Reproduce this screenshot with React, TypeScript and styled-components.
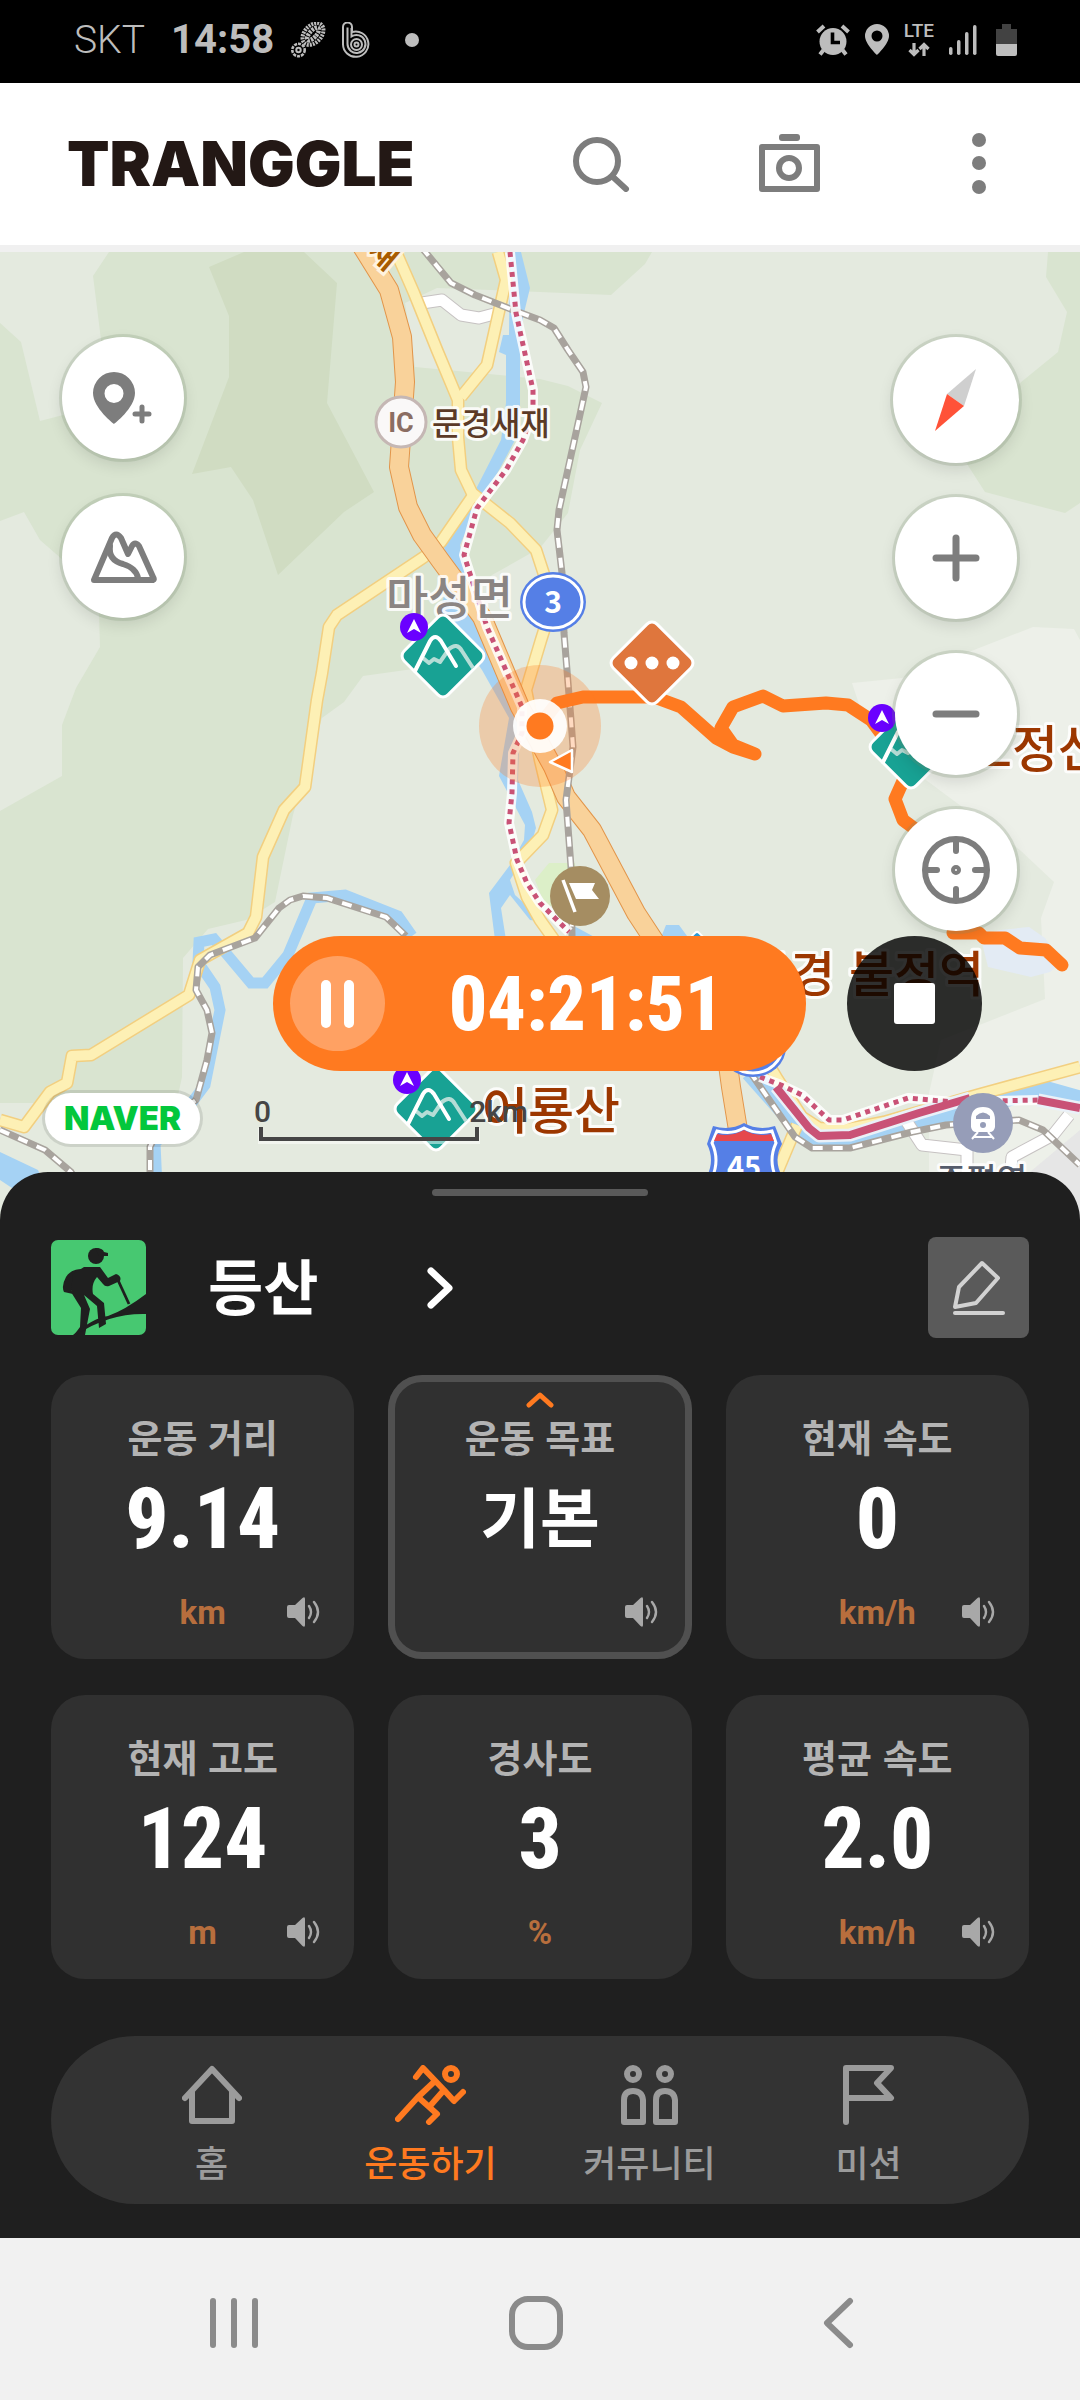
import React from 'react';
import styled, { createGlobalStyle } from 'styled-components';

const KR = "'Noto Sans CJK KR', 'Noto Sans', sans-serif";
const NUM = "'Roboto Condensed', 'Liberation Sans Narrow', Roboto, sans-serif";
const ORANGE = '#ff7a20';

const GlobalStyle = createGlobalStyle`
  *, *::before, *::after { box-sizing: border-box; }
  body { margin: 0; background: #1f1f1f; font-family: ${KR}; }
  button { border: 0; padding: 0; margin: 0; background: none; font: inherit; color: inherit; cursor: pointer; }
  h1, h2, p { margin: 0; padding: 0; font-weight: inherit; }
  svg { display: block; }
`;

const Page = styled.div`
  display: flex;
  flex-direction: column;
  min-height: 100vh;
`;

/* ---------- status bar ---------- */

const StatusBar = styled.div`
  display: flex;
  align-items: center;
  justify-content: space-between;
  height: 83px;
  padding: 0 63px 4px 74px;
  background: #000;
  color: #bdbdbd;
  font-family: Roboto, sans-serif;
`;
const StatusGroup = styled.div<{ $gap: number }>`
  display: flex;
  align-items: center;
  gap: ${(p) => p.$gap}px;
`;
const Carrier = styled.span`
  font-size: 39px;
  font-weight: 300;
  margin-right: 10px;
`;
const Clock = styled.time`
  font-size: 40px;
  font-weight: 700;
`;
const MoreDot = styled.span`
  width: 14px;
  height: 14px;
  margin-left: 18px;
  border-radius: 50%;
  background: #bdbdbd;
`;
const Network = styled.div`
  display: flex;
  flex-direction: column;
  align-items: center;
  gap: 3px;
  font-size: 19px;
  line-height: 16px;
  font-weight: 500;
`;

/* ---------- header ---------- */

const Header = styled.header`
  display: flex;
  align-items: center;
  justify-content: space-between;
  height: 169px;
  padding: 0 93px 0 67px;
  background: #fff;
  border-bottom: 7px solid #f0f0f0;
  color: #7d7d7d;
`;
const Brand = styled.h1`
  font-family: Inter, sans-serif;
  font-size: 62px;
  line-height: 62px;
  font-weight: 900;
  color: #231815;
`;
const HeaderTools = styled.div`
  display: flex;
  align-items: center;
  gap: 129px;
`;
const MoreButton = styled.button`
  margin-left: 22px;
`;

/* ---------- map ---------- */

const MapArea = styled.main`
  position: relative;
  flex: 1 0 auto;
  overflow: hidden;
  padding: 85px 61px 60px 62px;
  background: #e4eadf;
`;
const MapCanvas = styled.svg`
  position: absolute;
  inset: 0;
  width: 100%;
  height: 100%;
`;
const MapTools = styled.div`
  position: relative;
  display: flex;
  justify-content: space-between;
`;
const ToolColumn = styled.div<{ $gap: number }>`
  display: flex;
  flex-direction: column;
  align-items: center;
  gap: ${(p) => p.$gap}px;
`;
const RoundButton = styled.button<{ $large?: boolean }>`
  display: grid;
  place-items: center;
  width: ${(p) => (p.$large ? 126 : 122)}px;
  height: ${(p) => (p.$large ? 126 : 122)}px;
  border-radius: 50%;
  background: #fff;
  color: #7d7d7d;
  box-shadow: 0 0 0 3px rgba(120, 140, 110, 0.22), 0 6px 16px rgba(0, 0, 0, 0.12);
`;
const TimerRow = styled.div`
  position: relative;
  display: flex;
  justify-content: flex-end;
  gap: 41px;
  margin-top: 5px;
  padding-right: 37px;
`;
const Timer = styled.div`
  display: flex;
  align-items: center;
  width: 533px;
  height: 135px;
  padding-left: 17px;
  border-radius: 68px;
  background: ${ORANGE};
`;
const PauseButton = styled.button`
  display: flex;
  align-items: center;
  justify-content: center;
  gap: 13px;
  width: 95px;
  height: 95px;
  border-radius: 50%;
  background: #ffa163;
`;
const PauseBar = styled.span`
  width: 10px;
  height: 48px;
  border-radius: 5px;
  background: #fff;
`;
const Elapsed = styled.time`
  flex: 1;
  padding-right: 19px;
  text-align: center;
  font-family: ${NUM};
  font-size: 76px;
  line-height: 76px;
  font-weight: 800;
  color: #fff;
`;
const StopButton = styled.button`
  display: grid;
  place-items: center;
  width: 135px;
  height: 135px;
  border-radius: 50%;
  background: rgba(0, 0, 0, 0.81);
`;
const StopSquare = styled.span`
  width: 41px;
  height: 41px;
  border-radius: 3px;
  background: #fff;
`;
const MapFooter = styled.div`
  position: relative;
  display: flex;
  align-items: center;
  gap: 54px;
  margin: 22px 0 0 -17px;
`;
const NaverBadge = styled.a`
  display: grid;
  place-items: center;
  width: 155px;
  height: 51px;
  border-radius: 26px;
  background: #fff;
  box-shadow: 0 0 0 3px rgba(0, 0, 0, 0.1);
  font-family: Inter, sans-serif;
  font-size: 33px;
  line-height: 33px;
  font-weight: 900;
  color: #03c73c;
  text-decoration: none;
`;
const Scale = styled.div`
  width: 274px;
  font-family: Roboto, sans-serif;
  font-size: 30px;
  line-height: 30px;
  font-weight: 500;
  color: #454545;
`;
const ScaleLabels = styled.div`
  display: flex;
  justify-content: space-between;
`;
const ScaleBar = styled.div`
  width: 220px;
  height: 14px;
  margin-left: 5px;
  border: solid #454545;
  border-width: 0 4px 4px;
  box-shadow: 0 2px 0 1px rgba(255, 255, 255, 0.5);
`;

/* ---------- workout panel ---------- */

const Panel = styled.section`
  position: relative;
  margin-top: -48px;
  padding: 17px 51px 34px;
  border-radius: 48px 48px 0 0;
  background: #1f1f1f;
`;
const Handle = styled.div`
  width: 216px;
  height: 7px;
  margin: 0 auto;
  border-radius: 4px;
  background: #5a5a5a;
`;
const PanelHead = styled.div`
  display: flex;
  align-items: center;
  justify-content: space-between;
  margin: 41px 0 37px;
`;
const ActivityButton = styled.button`
  display: flex;
  align-items: center;
  color: #fff;
`;
const ActivityName = styled.span`
  margin: 0 109px 0 62px;
  padding-bottom: 8px;
  font-size: 60px;
  line-height: 72px;
  font-weight: 700;
`;
const EditButton = styled.button`
  display: grid;
  place-items: center;
  width: 101px;
  height: 101px;
  border-radius: 8px;
  background: #5a5a5a;
  color: #d2d2d2;
`;
const Cards = styled.div`
  display: grid;
  grid-template-columns: repeat(3, 1fr);
  gap: 36px 34px;
`;
const CardBox = styled.article<{ $active?: boolean }>`
  position: relative;
  display: flex;
  flex-direction: column;
  align-items: center;
  height: 284px;
  padding-top: 39px;
  border-radius: 34px;
  background: #303030;
  box-shadow: ${(p) => (p.$active ? 'inset 0 0 0 7px #505050' : 'none')};
`;
const CardTitle = styled.h2`
  font-size: 38px;
  line-height: 44px;
  font-weight: 700;
  color: #b3b3b3;
`;
const CardValue = styled.p<{ $text?: boolean }>`
  margin-top: ${(p) => (p.$text ? 10 : 15)}px;
  font-family: ${(p) => (p.$text ? KR : NUM)};
  font-size: ${(p) => (p.$text ? 65 : 85)}px;
  line-height: 92px;
  font-weight: ${(p) => (p.$text ? 700 : 800)};
  color: #fff;
`;
const CardUnit = styled.p`
  margin-top: 26px;
  font-family: Roboto, sans-serif;
  font-size: 33px;
  line-height: 44px;
  font-weight: 700;
  color: #b76e3d;
`;
const CardCaret = styled.svg`
  position: absolute;
  top: 16px;
`;
const SoundButton = styled.button`
  position: absolute;
  right: 34px;
  bottom: 32px;
  color: #a8a8a8;
`;

/* ---------- navigation ---------- */

const TabBar = styled.nav`
  display: grid;
  grid-template-columns: repeat(4, 1fr);
  height: 168px;
  margin-top: 57px;
  padding: 0 51px;
  border-radius: 84px;
  background: #333;
`;
const Tab = styled.a<{ $on?: boolean }>`
  display: flex;
  flex-direction: column;
  align-items: center;
  gap: 12px;
  padding-top: 29px;
  font-size: 36px;
  line-height: 48px;
  font-weight: 500;
  white-space: nowrap;
  text-decoration: none;
  color: ${(p) => (p.$on ? ORANGE : '#9b9b9b')};
`;
const SystemBar = styled.div`
  display: grid;
  grid-template-columns: repeat(3, 1fr);
  height: 162px;
  padding: 8px 91px 0 83px;
  background: #f1f1f1;
  color: #8b8b8b;
`;
const SystemButton = styled.button`
  display: grid;
  place-items: center;
`;

/* ---------- icons ---------- */

type LineProps = { w: number; h: number; sw: number; children: React.ReactNode };
const Line = ({ w, h, sw, children }: LineProps) => (
  <svg width={w} height={h} viewBox={`0 0 ${w} ${h}`} fill="none" stroke="currentColor" strokeWidth={sw} strokeLinecap="round" strokeLinejoin="round" aria-hidden="true">
    {children}
  </svg>
);

const ShoeIcon = () => (
  <svg width="36" height="36" viewBox="0 0 36 36" fill="none" stroke="#bdbdbd" aria-hidden="true">
    <g transform="rotate(42 23 12)">
      <ellipse cx="23" cy="12" rx="8.5" ry="12.5" strokeWidth="4" strokeDasharray="2 1" />
      <ellipse cx="23" cy="12" rx="3.4" ry="8" strokeWidth="4.5" strokeDasharray="2.4 1" />
    </g>
    <circle cx="8.5" cy="28" r="6.2" strokeWidth="2.6" strokeDasharray="3 1" />
    <circle cx="8.5" cy="28" r="2.2" strokeWidth="2" />
  </svg>
);
const BandIcon = () => (
  <svg width="29" height="36" viewBox="0 0 29 36" fill="none" stroke="#bdbdbd" strokeWidth="2" aria-hidden="true">
    <path d="M1 22V5a4.500 4.500 0 0 1 9 0v5a12.700 12.700 0 1 1-9 12z" />
    <path d="M5.500 22V5.500M5.500 22a9 9 0 1 0 4-7.500V6" />
    <circle cx="14.500" cy="22.500" r="5.500" />
    <circle cx="14.500" cy="22.500" r="2" />
  </svg>
);
const AlarmIcon = () => (
  <svg width="34" height="32" viewBox="0 0 34 32" aria-hidden="true">
    <circle cx="17" cy="17.5" r="13.5" fill="#bdbdbd" />
    <path d="M1.500 8 8 2M32.500 8 26 2M7.500 26 4 30.500M26.500 26 30 30.500" stroke="#bdbdbd" strokeWidth="4" />
    <path d="M16.500 8.500V18.500H24" fill="none" stroke="#000" strokeWidth="3.6" />
  </svg>
);
const PlaceIcon = () => (
  <svg width="24" height="31" viewBox="0 0 24 31" aria-hidden="true">
    <path fillRule="evenodd" fill="#bdbdbd" d="M12 0a12 12 0 0 1 12 12c0 8-12 19-12 19S0 20 0 12A12 12 0 0 1 12 0zm0 6.500a5.500 5.500 0 1 0 0 11 5.500 5.500 0 0 0 0-11z" />
  </svg>
);
const DataArrows = () => (
  <svg width="22" height="15" viewBox="0 0 22 15" fill="none" stroke="#bdbdbd" strokeWidth="3.2" aria-hidden="true">
    <path d="M6 1v11M1.500 8 6 12.500 10.500 8M16 14V3M11.500 7 16 2.500 20.500 7" />
  </svg>
);
const SignalIcon = () => (
  <svg width="28" height="30" viewBox="0 0 28 30" fill="#bdbdbd" aria-hidden="true">
    <rect x="0" y="22" width="3.5" height="8" rx="1.7" />
    <rect x="8" y="15" width="3.5" height="15" rx="1.7" />
    <rect x="16" y="7" width="3.5" height="23" rx="1.7" />
    <rect x="24" y="0" width="3.5" height="30" rx="1.7" />
  </svg>
);
const BatteryIcon = () => (
  <svg width="25" height="32" viewBox="-4 0 25 32" aria-hidden="true">
    <path d="M6 0h9v5h6v15H0V5h6z" fill="#424242" />
    <path d="M0 20h21v10a2 2 0 0 1-2 2H2a2 2 0 0 1-2-2z" fill="#bdbdbd" />
  </svg>
);
const SpeakerIcon = () => (
  <svg width="33" height="30" viewBox="0 0 33 30" fill="none" aria-hidden="true">
    <path d="M0 10Q0 8 2 8H8L15.500 1Q18 -1 18 2V28Q18 31 15.500 29L8 21H2Q0 21 0 19z" fill="currentColor" />
    <path d="M22 9Q26 15 22 21M27 5Q35 15 27 25" stroke="currentColor" strokeWidth="2.4" strokeLinecap="round" />
  </svg>
);
const HikerIcon = () => (
  <svg width="95" height="95" viewBox="0 0 95 95" fill="#1f1f1f" aria-hidden="true">
    <rect width="95" height="95" rx="7" fill="#47c871" />
    <ellipse cx="45" cy="16" rx="8" ry="8" />
    <path d="M44 8Q52 8 53 12L57 13V16H48z" />
    <path d="M31 29Q20 29 15 37Q10 46 13 52L22 54L20 50L34 54z" />
    <path d="M33 27H49L57 38L65 34Q71 36 69 41L58 46Q54 47 52 44L46 37Q40 44 42 54L53 63L55 84L48 88L46 66L33 55L39 69L34 95H23L29 87L30 68L20 52L22 34z" />
    <path d="M66 38 78 64" stroke="#1f1f1f" strokeWidth="2.8" />
    <path d="M22 95Q42 78 57 76Q74 70 95 54V74Q58 73 25 95z" />
  </svg>
);

/* ---------- map drawing ---------- */

const GREEN = '#d9e4d0';
const PALE = '#e4eadf';
const WATER = '#a5d2f4';

const yellowRoads = [
  'M396,252 L414,293 L437,350 L458,400 L458,437 L461,470 L472,493 L510,523 L536,550 L553,602 L541,640 L526,690 L540,760 L552,810 L543,835 L516,863 L527,897 L540,920 L572,965',
  'M498,252 L506,280 L487,365 L461,397',
  'M472,497 L441,542 L424,557 L337,615 L329,627 L322,673 L317,700 L305,787 L284,810 L263,857 L256,917 L248,933 L200,960 L189,995 L91,1055 L72,1056 L67,1083 L50,1092 L24,1127 L0,1120',
  'M1080,1067 L977,1095 L884,1122 L843,1130 L819,1128 L802,1117 L778,1080 L760,1050',
  'M797,1125 L776,1175',
];
const whiteRoads = [
  'M422,303 L442,300 L461,315 L479,318 L494,314',
  'M907,1122 L922,1145 L967,1150 L967,1200',
  'M1069,1115 L1053,1135 L1012,1157 L1008,1200',
];
const railways = [
  'M422,248 L451,283 L475,295 L513,310 L540,320 L554,328 L568,350 L583,372 L586,387 L581,410 L559,510 L557,530 L562,573 L564,633 L571,720 L573,747 L566,800 L571,867 L572,936',
  'M150,1210 L150,1147 L160,1125 L196,1100 L207,1060 L212,1033 L207,1010 L196,990 L198,967 L210,955 L255,938 L279,908 L290,900 L303,896 L327,898 L386,917 L406,936',
  'M0,1130 L45,1150 L71,1172 L95,1210',
  'M750,1072 L795,1137 L812,1148 L850,1148 L912,1132 L946,1125 L1019,1120 L1043,1130 L1080,1165',
];
const dotted = [
  'M510,252 L516,313 L533,390 L533,410 L523,440 L506,470 L477,508 L464,555 L487,627 L522,707 L522,733 L513,753 L512,793 L509,823 L517,860 L527,883 L540,903 L569,932',
  'M760,1077 L781,1085 L802,1095 L829,1120 L843,1120 L908,1098 L953,1102 L1038,1100',
];
const metro = ['M776,1087 L809,1128 L819,1136 L850,1135 L919,1113 L970,1098', 'M1038,1100 L1080,1108'];
const track = [
  'M540,725 L557,703 L583,697 L654,697 L681,707 L716,738 L733,747 L755,754 L733,745 L721,728 L733,707 L763,696 L783,706 L826,703 L848,705 L871,720 L908,770 L895,799 L903,820 L930,840',
  'M953,933 L979,933 L984,938 L1005,938 L1020,948 L1046,950 L1062,965',
];

const Peak = ({ x, y, px, py }: { x: number; y: number; px: number; py: number }) => (
  <g>
    <g transform={`translate(${x} ${y})`}>
      <rect x="-31" y="-31" width="62" height="62" rx="7" transform="rotate(45)" fill="#18a294" stroke="#fff" strokeWidth="3" />
      <path d="M-20 2 -14 7 -9 3 -3 6 6 -7Q14 -14 19 -5L30 12" fill="none" stroke="#b5ddd6" strokeWidth="4" strokeLinejoin="round" />
      <path d="M-28 15 -13 -15Q-8 -23 -2 -15L13 10" fill="none" stroke="#fff" strokeWidth="4" strokeLinecap="round" />
    </g>
    <circle cx={px} cy={py} r="14" fill="#6a00ff" />
    <path d={`M${px} ${py - 8} l7 14 l-7 -4 l-7 4z`} fill="#fff" />
  </g>
);

type LabelProps = { x: number; y: number; size: number; fill: string; children: string };
const Label = ({ x, y, size, fill, children }: LabelProps) => (
  <text x={x} y={y} fontSize={size} fontWeight="500" fill={fill} stroke="#fff" strokeOpacity="0.85" strokeWidth="6" strokeLinejoin="round" paintOrder="stroke" fontFamily={KR}>
    {children}
  </text>
);

const MapDrawing = () => (
  <MapCanvas viewBox="0 252 1080 968" preserveAspectRatio="xMidYMin slice" role="img" aria-label="지도">
    <rect y="252" width="1080" height="968" fill={PALE} />
    <path fill={GREEN} d="M0,252 H652 L645,264 L611,295 L540,292 L437,288 L405,303 L415,367 L540,379 L568,386 L602,403 L580,450 L568,513 L540,548 L492,575 L450,620 L413,669 L363,676 L344,702 L322,718 L293,815 L275,902 L246,920 L208,929 L183,958 L182,1077 L177,1100 L71,1103 H0z" />
    <path fill={PALE} d="M0,252 H109 L93,276 L101,340 L103,400 L63,415 L40,421 L21,342 L0,323z M0,521 L24,512 L40,540 L63,560 L99,613 L100,647 L76,688 L62,725 V776 L0,811z" />
    <path fill="#d0dcc2" d="M209,267 L244,252 H304 L337,283 L327,403 L374,492 L344,512 L278,575 L253,500 L231,467 L192,474 L229,377 V316z" />
    <path fill={GREEN} d="M1048,252 L1046,277 L1067,312 L1058,352 L1020,383 L967,464 L985,492 L1065,513 L1080,503 V252z" />
    <path fill="#edf0e9" d="M852,683 L902,678 L974,650 L1033,627 L1074,629 L1080,640 V1220 H929 V1093 L941,1040 L982,1024 L1045,999 L1041,918 L1054,882 L1020,850 L926,780 L860,707z" />
    <path fill="#e6e6e6" d="M1080,1130 L1030,1172 L1010,1220 H1080z" />
    <path fill="#e3ebf4" d="M980,935 L1000,930 L1029,927 L1045,938 L1062,962 L1050,972 L1031,977 L988,967z" />
    <path fill="#dcefc8" d="M549,863 H575 L580,910 L545,905 L535,880z" />

    <g fill={WATER}>
      <path d="M510,252 H521 L530,288 L523,317 L520,353 V407 L515,440 L498,472 L478,505 L460,545 L468,590 L500,640 L520,700 L518,780 L532,812 L536,828 L530,848 L510,880 L515,895 L545,922 L530,920 L510,895 L501,908 L506,940 H495 L489,893 L510,865 L524,840 L525,825 L499,776 L509,718 L482,670 L440,610 L450,575 L444,547 L477,487 L501,440 L506,403 V355 L499,352 L503,335 L509,335z" />
      <path d="M0,1152 L38,1170 L60,1220 L0,1180z M666,925 H679 L690,940 H660z M574,926 L600,940 H572z" />
    </g>
    <g fill="none" stroke={WATER} strokeWidth="11">
      <path d="M158,1210 L155,1143 L175,1125 L205,1085 L214,1040 L220,1010 L215,987 L198,962 L199,942 L214,939 L251,983 L265,983 L288,955 L312,898 L345,895 L398,916 L412,936" />
      <path strokeWidth="19" d="M750,1072 L790,1117 L810,1138 L850,1138 L919,1122 L970,1108 L1022,1093 L1048,1091 L1080,1100" />
    </g>

    <g fill="none" strokeLinejoin="round">
      {whiteRoads.map((d) => <path key={d} d={d} stroke="#c6c2c2" strokeWidth="13" />)}
      {whiteRoads.map((d) => <path key={d} d={d} stroke="#fff" strokeWidth="11" />)}
      {yellowRoads.map((d) => <path key={d} d={d} stroke="#f2cf80" strokeWidth="13" />)}
      {yellowRoads.map((d) => <path key={d} d={d} stroke="#fdf0b5" strokeWidth="10" />)}
      {['#e2954a', '#f9d29a'].map((c, i) => (
        <path key={c} stroke={c} strokeWidth={20 - i * 2} d="M358,240 L389,290 L402,337 L405,382 L399,467 L408,507 L422,535 L440,560 L482,617 L520,707 L553,767 L566,797 L592,830 L636,913 L726,1050 L731,1087 L738,1130 L740,1200" />
      ))}
      {railways.map((d) => <path key={d} d={d} stroke="#a8a39d" strokeWidth="7" />)}
      {railways.map((d) => <path key={d} d={d} stroke="#fff" strokeWidth="4" strokeDasharray="10 10" />)}
      {dotted.map((d) => <path key={d} d={d} stroke="#fff" strokeOpacity="0.85" strokeWidth="10" />)}
      {metro.map((d) => <path key={d} d={d} stroke="#eaf1f8" strokeWidth="13" />)}
      {dotted.map((d) => <path key={d} d={d} stroke="#c95276" strokeWidth="5" strokeDasharray="5 5" />)}
      {metro.map((d) => <path key={d} d={d} stroke="#c95276" strokeWidth="8" />)}
    </g>

    <text x="362" y="260" fontSize="30" fontWeight="700" fill="#a85c00" stroke="#fff3df" strokeWidth="6" paintOrder="stroke" fontFamily={KR} transform="rotate(40 372 262)">재</text>

    <circle cx="401" cy="422" r="25" fill="#faf8f8" stroke="#c5b7b4" strokeWidth="3" />
    <text x="401" y="432" fontSize="27" fontWeight="700" fill="#8b6d62" textAnchor="middle" fontFamily="Roboto, sans-serif">IC</text>
    <Label x={432} y={435} size={32} fill="#5b3a26">문경새재</Label>
    <Label x={386} y={614} size={46} fill="#8b8583">마성면</Label>
    <Label x={966} y={767} size={50} fill="#9c3700">오정산</Label>
    <Label x={745} y={992} size={49} fill="#9c3700">문경 불정역</Label>
    <Label x={482} y={1129} size={50} fill="#9c3700">어룡산</Label>
    <Label x={936} y={1192} size={33} fill="#555c6b">주평역</Label>

    <circle cx="580" cy="896" r="30" fill="#a58d62" />
    <path d="M563 880 L575 912" stroke="#fff" strokeWidth="3.5" />
    <path d="M569 883 H595 L592 890 L599 899 H576z" fill="#fff" />

    <circle cx="983" cy="1123" r="30" fill="#969db8" />
    <path fillRule="evenodd" fill="#fff" d="M983 1107Q995 1107 995 1120V1127Q994 1132 990 1132H976Q972 1132 971 1127V1120Q971 1107 983 1107zM976 1119H990V1116Q983 1109 976 1116zM983 1122A3 3 0 1 0 983 1128A3 3 0 0 0 983 1122z" />
    <path d="M978 1132 972 1139M988 1132 994 1139M974 1137H992" stroke="#fff" strokeWidth="2" />

    <rect x="687" y="935" width="20" height="20" rx="3" transform="rotate(45 697 945)" fill="#2b9bd6" stroke="#fff" strokeWidth="2" />

    <g fill="#557fe6">
      <ellipse cx="553" cy="602" rx="33" ry="30" />
      <ellipse cx="553" cy="602" rx="29" ry="26" stroke="#fff" strokeWidth="3" />
      <ellipse cx="753" cy="1047" rx="33" ry="30" />
      <ellipse cx="753" cy="1047" rx="29" ry="26" stroke="#fff" strokeWidth="3" />
      <path d="M713 1126 Q730 1131 744 1123 Q758 1131 775 1126 L782 1144 Q773 1160 782 1176 V1210 H707 V1176 Q715 1160 707 1144z" />
      <path d="M717 1131 Q732 1135 744 1128 Q756 1135 772 1131 L776 1143 Q768 1160 776 1178 V1210 H712 V1178 Q720 1160 712 1143z" stroke="#fff" strokeWidth="3" />
      <path d="M717 1134 Q732 1137 744 1130 Q756 1137 771 1134 L774 1141 H714z" fill="#e6484c" />
    </g>
    <g fill="#fff" fontWeight="700" textAnchor="middle" fontFamily={KR}>
      <text x="553" y="613" fontSize="30">3</text>
      <text x="744" y="1178" fontSize="29">45</text>
    </g>

    <g fill="none" stroke={ORANGE} strokeWidth="13" strokeLinejoin="round" strokeLinecap="round">
      {track.map((d) => <path key={d} d={d} />)}
    </g>
    <Peak x={911} y={747} px={882} py={718} />
    <Peak x={443} y={656} px={414} py={627} />
    <Peak x={436} y={1109} px={407} py={1080} />

    <rect x="621" y="632" width="62" height="62" rx="7" transform="rotate(45 652 663)" fill="#df763d" stroke="#fff" strokeWidth="3" />
    <g fill="#fff">
      <circle cx="631" cy="663" r="6.5" />
      <circle cx="652" cy="663" r="6.5" />
      <circle cx="673" cy="663" r="6.5" />
    </g>

    <circle cx="540" cy="726" r="61" fill={ORANGE} fillOpacity="0.28" />
    <circle cx="540" cy="726" r="27" fill="#fff" fillOpacity="0.92" />
    <circle cx="540" cy="726" r="13.5" fill={ORANGE} />
    <path d="M550 762 572 750V772z" fill={ORANGE} stroke="#fff" strokeWidth="2.5" strokeLinejoin="round" />
  </MapCanvas>
);

/* ---------- data ---------- */

type Metric = { title: string; value: string; unit?: string; sound?: boolean; goal?: boolean };
const metrics: Metric[] = [
  { title: '운동 거리', value: '9.14', unit: 'km', sound: true },
  { title: '운동 목표', value: '기본', sound: true, goal: true },
  { title: '현재 속도', value: '0', unit: 'km/h', sound: true },
  { title: '현재 고도', value: '124', unit: 'm', sound: true },
  { title: '경사도', value: '3', unit: '%' },
  { title: '평균 속도', value: '2.0', unit: 'km/h', sound: true },
];

const MetricCard = ({ title, value, unit, sound, goal }: Metric) => (
  <CardBox $active={goal}>
    {goal && (
      <CardCaret width="28" height="17" viewBox="0 0 28 17" fill="none" aria-hidden="true">
        <path d="M3 14 14 4 25 14" stroke={ORANGE} strokeWidth="5" strokeLinecap="round" strokeLinejoin="round" />
      </CardCaret>
    )}
    <CardTitle>{title}</CardTitle>
    <CardValue $text={goal}>{value}</CardValue>
    {unit && <CardUnit>{unit}</CardUnit>}
    {sound && <SoundButton aria-label={`${title} 음성 안내`}><SpeakerIcon /></SoundButton>}
  </CardBox>
);

export default function App() {
  return (
    <Page lang="ko">
      <GlobalStyle />
      <StatusBar>
        <StatusGroup $gap={16}>
          <Carrier>SKT</Carrier>
          <Clock>14:58</Clock>
          <ShoeIcon />
          <BandIcon />
          <MoreDot />
        </StatusGroup>
        <StatusGroup $gap={15}>
          <AlarmIcon />
          <PlaceIcon />
          <Network>LTE<DataArrows /></Network>
          <SignalIcon />
          <BatteryIcon />
        </StatusGroup>
      </StatusBar>

      <Header>
        <Brand>TRANGGLE</Brand>
        <HeaderTools>
          <button aria-label="검색">
            <Line w={57} h={56} sw={6}>
              <circle cx="24" cy="25" r="21" />
              <path d="M40 41 53 53" />
            </Line>
          </button>
          <button aria-label="카메라">
            <svg width="61" height="60" viewBox="0 0 61 60" fill="none" stroke="currentColor" strokeWidth="6" strokeLinejoin="round" aria-hidden="true">
              <rect x="3" y="13" width="55" height="42" />
              <circle cx="30" cy="34" r="10" />
              <rect x="20" y="0" width="21" height="7" rx="3" fill="currentColor" stroke="none" />
            </svg>
          </button>
          <MoreButton aria-label="더보기">
            <svg width="16" height="62" viewBox="0 0 16 62" fill="currentColor" aria-hidden="true">
              <circle cx="8" cy="7" r="7" />
              <circle cx="8" cy="30" r="7" />
              <circle cx="8" cy="54" r="7" />
            </svg>
          </MoreButton>
        </HeaderTools>
      </Header>

      <MapArea>
        <MapDrawing />
        <MapTools>
          <ToolColumn $gap={37}>
            <RoundButton aria-label="장소 추가">
              <svg width="66" height="52" viewBox="-3 0 66 52" aria-hidden="true">
                <path fillRule="evenodd" fill="currentColor" d="M21 0a21 21 0 0 1 21 21c0 15-21 31-21 31S0 36 0 21A21 21 0 0 1 21 0zm0 12a9.500 9.500 0 1 0 0 19 9.500 9.500 0 0 0 0-19z" />
                <path d="M42 42H56M49 35V49" stroke="currentColor" strokeWidth="5" strokeLinecap="round" />
              </svg>
            </RoundButton>
            <RoundButton aria-label="지형">
              <Line w={67} h={53} sw={6}>
                <path d="M4 49 22 7Q26 0 31 7L38 23 42 15Q45 10 49 15L63 46Q65 49 62 49z" />
                <path d="M20 15Q18 29 33 33Q46 37 48 47" />
              </Line>
            </RoundButton>
          </ToolColumn>
          <ToolColumn $gap={34}>
            <RoundButton $large aria-label="나침반">
              <svg width="64" height="64" viewBox="-32 -32 64 64" aria-hidden="true">
                <path d="M20 -31 8 6 -9 -6z" fill="#cfcfcf" />
                <path d="M-21 31 8 6 -9 -6z" fill="#ff5238" />
              </svg>
            </RoundButton>
            <RoundButton aria-label="확대">
              <Line w={48} h={48} sw={7}><path d="M4 24H44M24 4V44" /></Line>
            </RoundButton>
            <RoundButton aria-label="축소">
              <Line w={48} h={48} sw={7}><path d="M4 24H44" /></Line>
            </RoundButton>
            <RoundButton aria-label="현재 위치">
              <Line w={68} h={68} sw={6}>
                <circle cx="34" cy="34" r="31" />
                <path d="M34 4V15M34 53V64M4 34H15M53 34H64" />
                <circle cx="34" cy="34" r="2" />
              </Line>
            </RoundButton>
          </ToolColumn>
        </MapTools>
        <TimerRow>
          <Timer>
            <PauseButton aria-label="일시정지"><PauseBar /><PauseBar /></PauseButton>
            <Elapsed>04:21:51</Elapsed>
          </Timer>
          <StopButton aria-label="정지"><StopSquare /></StopButton>
        </TimerRow>
        <MapFooter>
          <NaverBadge href="#naver">NAVER</NaverBadge>
          <Scale>
            <ScaleLabels><span>0</span><span>2km</span></ScaleLabels>
            <ScaleBar />
          </Scale>
        </MapFooter>
      </MapArea>

      <Panel>
        <Handle />
        <PanelHead>
          <ActivityButton>
            <HikerIcon />
            <ActivityName>등산</ActivityName>
            <Line w={28} h={42} sw={7}><path d="M4 4 22 21 4 38" /></Line>
          </ActivityButton>
          <EditButton aria-label="편집">
            <Line w={56} h={58} sw={4}>
              <path d="M31 4 47 19 25 44 4 48 8 28z" />
              <path d="M4 54H52" />
            </Line>
          </EditButton>
        </PanelHead>
        <Cards>
          {metrics.map((m) => <MetricCard key={m.title} {...m} />)}
        </Cards>
        <TabBar>
          <Tab href="#home">
            <Line w={60} h={60} sw={6}>
              <path d="M3 33 30 4 57 33M10 26V56H50V26" />
            </Line>
            홈
          </Tab>
          <Tab href="#workout" $on aria-current="page">
            <Line w={71} h={60} sw={6}>
              <path d="M21 12 28 3 49 25 59 36 68 27M40 16 23 32 3 54M23 32 42 49 34 57M49 25 35 41" />
              <circle cx="56" cy="9" r="6" />
            </Line>
            운동하기
          </Tab>
          <Tab href="#community">
            <Line w={57} h={60} sw={6}>
              <circle cx="12" cy="9" r="6" />
              <circle cx="44" cy="9" r="6" />
              <path d="M3 57V35Q3 26 12 26T22 35V57zM35 57V35Q35 26 44 26T54 35V57z" />
            </Line>
            커뮤니티
          </Tab>
          <Tab href="#mission">
            <Line w={52} h={60} sw={6}>
              <path d="M3 57V3H48L34 18 48 33H3" />
            </Line>
            미션
          </Tab>
        </TabBar>
      </Panel>

      <SystemBar>
        <SystemButton aria-label="최근 앱">
          <Line w={50} h={52} sw={6}><path d="M4 4V48M25 4V48M46 4V48" /></Line>
        </SystemButton>
        <SystemButton aria-label="홈 화면">
          <Line w={56} h={56} sw={6}><rect x="4" y="4" width="48" height="48" rx="16" /></Line>
        </SystemButton>
        <SystemButton aria-label="뒤로">
          <Line w={32} h={52} sw={6}><path d="M28 4 5 26 28 48" /></Line>
        </SystemButton>
      </SystemBar>
    </Page>
  );
}
